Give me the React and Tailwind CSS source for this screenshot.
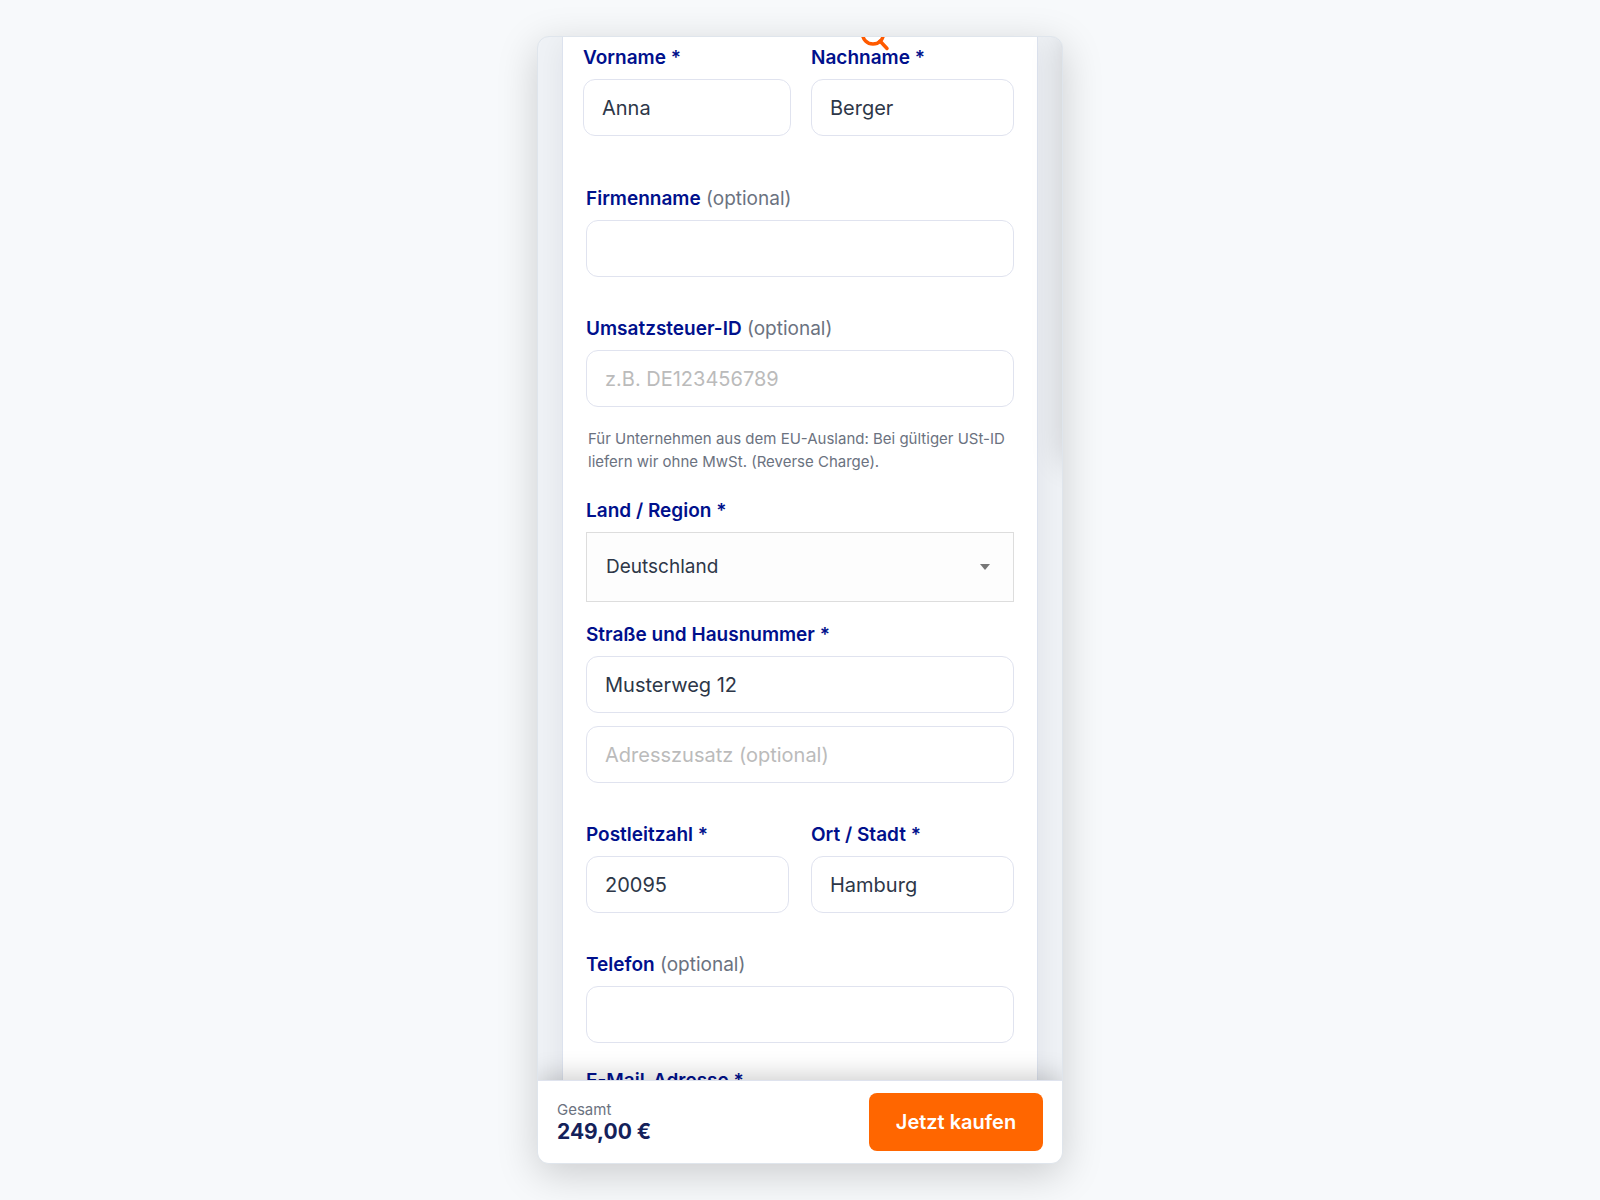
import React from "react";

const inputClass =
  "block h-[57px] w-full rounded-xl border border-[#e0e3ef] bg-white px-[18px] text-xl text-[#2d3748] placeholder:text-[#bbbbbb] focus:outline-none focus:ring";

function Label({ htmlFor, children, optional }) {
  return (
    <label htmlFor={htmlFor} className="mb-[9px] block text-[19px] leading-6 font-semibold text-[#00108c]">
      {children}
      {optional && <span className="font-normal text-[#6b7280]"> (optional)</span>}
    </label>
  );
}

function Field({ id, label, optional, ...props }) {
  return (
    <div className="min-w-0">
      <Label htmlFor={id} optional={optional}>{label}</Label>
      <input id={id} type="text" className={inputClass} {...props} />
    </div>
  );
}

export default function App() {
  return (
    <div className="flex h-screen justify-center bg-[#f7f9fb] py-9 font-['Inter',sans-serif]">
      <div className="relative flex w-full max-w-[526px] flex-col overflow-hidden rounded-xl border border-[#dfe5ec] bg-[#eff2f6] shadow-[0_10px_40px_rgba(0,0,0,0.18)]">
        <main className="min-h-0 flex-1 overflow-hidden px-6">
          <form className="relative min-h-full border-x border-[#dce2ee] bg-white px-[23px] pt-[9px] shadow-[0_4px_30px_rgba(15,23,42,0.07)]">
            <svg
              className="absolute -top-4 left-[296px] size-8 text-[#ff5a00]"
              viewBox="0 0 32 32"
              fill="none"
              stroke="currentColor"
              strokeWidth="3.500"
              strokeLinecap="round"
              aria-hidden="true"
            >
              <circle cx="14" cy="12.500" r="10.500" />
              <path d="M21 20l7 7.500" />
            </svg>

            <div className="-ml-[3px] grid grid-cols-[208fr_203fr] gap-5">
              <Field id="firstname" label="Vorname *" defaultValue="Anna" />
              <Field id="lastname" label="Nachname *" defaultValue="Berger" />
            </div>

            <div className="mt-[51px]">
              <Field id="company" label="Firmenname" optional />
            </div>

            <div className="mt-10">
              <Field id="vat" label="Umsatzsteuer-ID" optional placeholder="z.B. DE123456789" />
              <p className="mt-5 pl-0.5 text-[15px] leading-[23px] text-[#6b7280]">
                Für Unternehmen aus dem EU-Ausland: Bei gültiger USt-ID liefern wir ohne MwSt. (Reverse Charge).
              </p>
            </div>

            <div className="mt-[26px]">
              <Label htmlFor="country">Land / Region *</Label>
              <div className="relative">
                <select
                  id="country"
                  className="block h-[70px] w-full appearance-none border border-[#dddddd] bg-[#fdfdfd] px-[19px] text-[19px] text-[#2d3748]"
                >
                  <option>Deutschland</option>
                </select>
                <svg
                  className="pointer-events-none absolute top-8 right-6 h-1.5 w-2.5 text-[#777777]"
                  viewBox="0 0 10 6"
                  fill="currentColor"
                  aria-hidden="true"
                >
                  <path d="M0 0h10L5 6z" />
                </svg>
              </div>
            </div>

            <div className="mt-[21px] flex flex-col gap-[13px]">
              <Field id="street" label="Straße und Hausnummer *" defaultValue="Musterweg 12" />
              <input
                id="street2"
                type="text"
                aria-label="Adresszusatz (optional)"
                placeholder="Adresszusatz (optional)"
                className={inputClass}
              />
            </div>

            <div className="mt-10 grid grid-cols-2 gap-[22px]">
              <Field id="postcode" label="Postleitzahl *" defaultValue="20095" />
              <Field id="city" label="Ort / Stadt *" defaultValue="Hamburg" />
            </div>

            <div className="mt-10">
              <Field id="phone" type="tel" label="Telefon" optional />
            </div>

            <div className="mt-[26px]">
              <Field id="email" type="email" label="E-Mail-Adresse *" />
            </div>
          </form>
        </main>

        {/* off-canvas drawer, only its shadow reaches into view */}
        <div className="absolute top-0 left-full h-[425px] w-80 bg-white shadow-[0_0_30px_rgba(0,0,0,0.16)]" />

        <footer className="relative flex items-center justify-between border-t border-[#dfe3ee] bg-white px-[19px] py-3 shadow-[0_-4px_24px_rgba(0,0,0,0.2)]">
          <div>
            <div className="text-[15px] leading-5 text-[#6b7280]">Gesamt</div>
            <div className="text-[21px] leading-6 font-bold text-[#14215a]">249,00 €</div>
          </div>
          <button type="button" className="h-[58px] w-[174px] rounded-lg bg-[#ff6600] text-xl font-semibold text-white">
            Jetzt kaufen
          </button>
        </footer>
      </div>
    </div>
  );
}
